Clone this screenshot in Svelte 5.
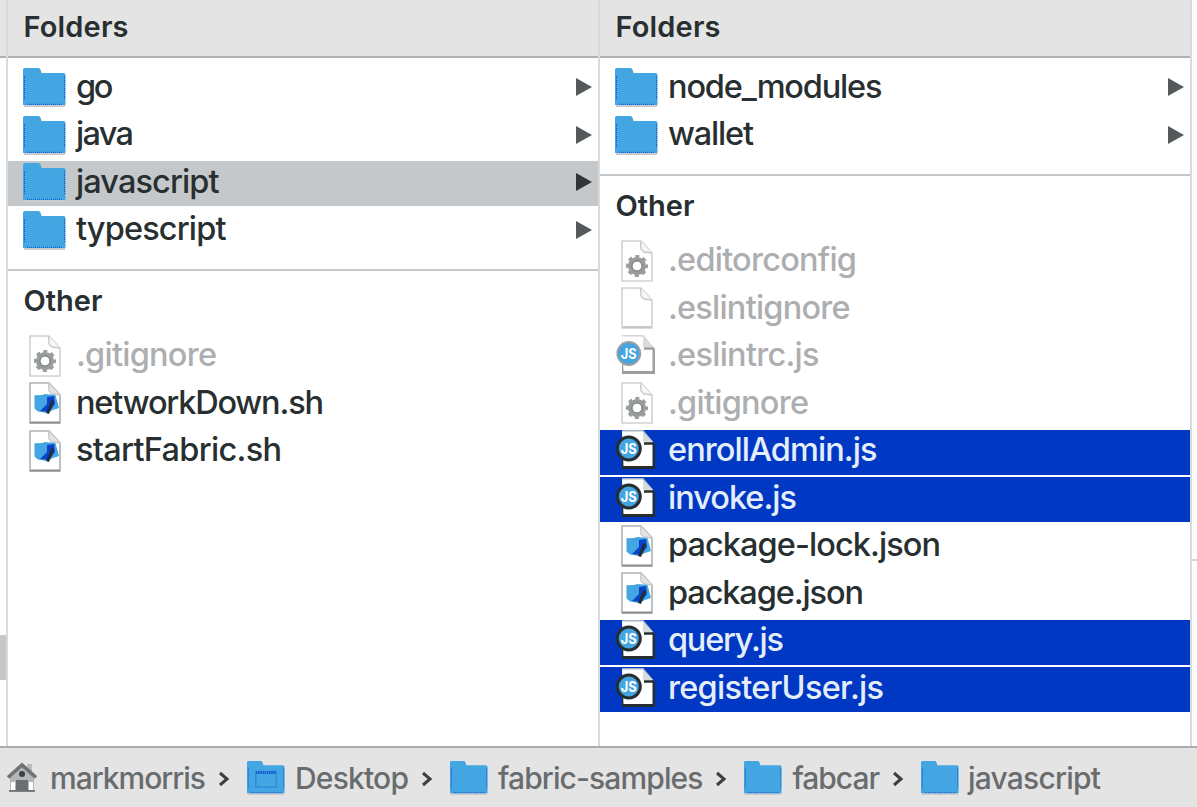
<script>
  const left = [
    { name: 'go', w: 34.5, icon: 'folder' },
    { name: 'java', w: 55, icon: 'folder' },
    { name: 'javascript', w: 140.5, icon: 'folder', state: 'current' },
    { name: 'typescript', w: 147.5, icon: 'folder' }
  ];
  const leftOther = [
    { name: '.gitignore', w: 138, icon: 'gear', state: 'dim' },
    { name: 'networkDown.sh', w: 245, icon: 'code' },
    { name: 'startFabric.sh', w: 203, icon: 'code' }
  ];
  const right = [
    { name: 'node_modules', w: 211.5, icon: 'folder' },
    { name: 'wallet', w: 83, icon: 'folder' }
  ];
  const rightOther = [
    { name: '.editorconfig', w: 186, icon: 'gear', state: 'dim' },
    { name: '.eslintignore', w: 179.5, icon: 'blank', state: 'dim' },
    { name: '.eslintrc.js', w: 148.5, icon: 'js', state: 'dim' },
    { name: '.gitignore', w: 138, icon: 'gear', state: 'dim' },
    { name: 'enrollAdmin.js', w: 206.5, icon: 'js', state: 'selected' },
    { name: 'invoke.js', w: 126, icon: 'js', state: 'selected' },
    { name: 'package-lock.json', w: 270, icon: 'code' },
    { name: 'package.json', w: 193, icon: 'code' },
    { name: 'query.js', w: 113, icon: 'js', state: 'selected' },
    { name: 'registerUser.js', w: 213, icon: 'js', state: 'selected' }
  ];
  const columns = [
    { folders: left, other: leftOther },
    { folders: right, other: rightOther }
  ];
  const path = [
    { name: 'markmorris', w: 153, icon: 'home' },
    { name: 'Desktop', w: 111, icon: 'desktop' },
    { name: 'fabric-samples', w: 202.5, icon: 'folder' },
    { name: 'fabcar', w: 84.5, icon: 'folder' },
    { name: 'javascript', w: 130, icon: 'folder' }
  ];

  // Tracks a label so that its letters span the given width.
  function fit(node, width) {
    const natural = node.getBoundingClientRect().width - 3;
    const spacing = (width - natural) / (node.textContent.length - 1);
    node.style.letterSpacing = spacing + 'px';
    node.style.marginRight = -spacing + 'px';
  }
</script>

{#snippet folder(desktop)}
  <svg class="folder" viewBox="0 0 43 40" preserveAspectRatio="none">
    <path d="M1 37h41v3H1z" fill="#c9cccd" />
    <path d="M0 2.5Q0 1 2 1h13q2 0 2.500 1.500l1 3.500h22q2 0 2 2v30H0z" fill="#43a5e1" />
    <path d="M1.500 9v24M41.500 9v24M4 37.300h35" stroke="#0b50cd" stroke-width="1" stroke-dasharray="1 1" fill="none" />
    {#if desktop}
      <path d="M10 13h23v18H10z" stroke="#0b50cd" stroke-width="1" stroke-dasharray="1 1" fill="none" />
      <path d="M10 14.500h23" stroke="#0b50cd" stroke-width="3" stroke-dasharray="1.500 1" />
    {/if}
  </svg>
{/snippet}

{#snippet icon(kind, state)}
  {#if kind === 'folder'}
    {@render folder(false)}
  {:else if kind === 'js'}
    {@const dark = state === 'selected' ? '#262d2f' : '#9c9fa1'}
    <svg class="js" viewBox="0 0 42 41">
      <path d="M6 1h21l12 13v25H6z" fill={dark} />
      <path d="M6 1h21l9.500 11v24H7.500z" fill="#fff" />
      <path d="M6 .8h21l10 12" fill="none" stroke={state === 'selected' ? '#a9b5c2' : '#d2d4d5'} stroke-width="1.500" />
      <path d="M27 2v10h10z" fill="#d9dcdd" />
      <path d="M28 13.500h9.500" stroke={dark} stroke-width="2.500" />
      <circle cx="12.800" cy="18.500" r="11.500" fill="#43a5e1" stroke={dark} stroke-width={state === 'selected' ? 3 : 1.8} />
      <text x="12.800" y="24" text-anchor="middle" textLength="16" lengthAdjust="spacingAndGlyphs">JS</text>
    </svg>
  {:else}
    <svg class="file" viewBox="0 0 32 42">
      <path d="M1 1h19l11 12v28H1z" fill="#fff" stroke={kind === 'code' ? '#b0b3b5' : '#cfd1d2'} stroke-width="1.600" />
      <path d="M19.500 1l.5 8 3 3 8 1" fill={kind === 'code' ? '#e3e4e5' : '#f7f7f7'} stroke="#c8cacc" stroke-width="1.400" />
      {#if kind === 'code'}
        <path d="M1 40.500h30" stroke="#8c8f91" stroke-width="2" />
        <path d="M5.500 13q5 1 11-1l10 1 3.500 13-6 2-6 3-9-1.500-3.500-3z" fill="#43a5e1" />
        <path d="M18 15l7-1 1 8-6 8-9-1 7-7z" fill="#0842c8" />
        <path d="M22.500 18l2.500 1-5 13-3-1z" fill="#262d2f" />
      {:else if kind === 'gear'}
        <g transform="translate(16 26)">
          <circle r="7" fill="none" stroke="#999c9e" stroke-width="4.200" />
          <circle r="9.700" fill="none" stroke="#999c9e" stroke-width="2.600" stroke-dasharray="4.100 3.518" stroke-dashoffset="2" />
          <circle r="5" fill="none" stroke="#707375" stroke-width="1" />
        </g>
      {:else}
        <path d="M2 40h28" stroke="#c4c8ca" stroke-width="2" />
      {/if}
    </svg>
  {/if}
{/snippet}

{#snippet row(item)}
  <li class="row {item.state ?? ''}">
    <span class="icon">{@render icon(item.icon, item.state)}</span>
    <span class="name" use:fit={item.w}>{item.name}</span>
    {#if item.icon === 'folder'}
      <svg class="arrow" viewBox="0 0 17 20"><path d="M0 1l16 9L0 19z" /></svg>
    {/if}
  </li>
{/snippet}

<div class="window">
  <main>
    <aside class="prev"><div class="head"></div><div class="mark"></div></aside>
    {#each columns as column}
      <section>
        <h2 class="head"><span use:fit={102}>Folders</span></h2>
        <ul class="folders">{#each column.folders as item}{@render row(item)}{/each}</ul>
        <h2 class="other"><span use:fit={76}>Other</span></h2>
        <ul>{#each column.other as item}{@render row(item)}{/each}</ul>
      </section>
    {/each}
    <aside class="next"><div></div></aside>
  </main>
  <footer>
    {#each path as crumb, i}
      {#if i}
        <svg class="chevron" viewBox="0 0 12 18"><path d="M2 3l7 6-7 6" /></svg>
      {/if}
      {#if crumb.icon === 'home'}
        <svg class="home" viewBox="0 0 30 31">
          <path d="M20 2h5v9h-5z" fill="#b9bcbd" />
          <path d="M3 14L15 4l12 10v15H3z" fill="#b4b6b8" />
          <path d="M4 20h4v8H4zm18 0h4v8h-4z" fill="#fff" />
          <path d="M1 15.500L15 3l14 12.500" fill="none" stroke="#707375" stroke-width="3.600" />
          <path d="M9 18h12v10H9z" fill="#6b6f71" />
          <circle cx="15" cy="12" r="3" fill="#3c4143" />
          <path d="M2 29h26" stroke="#505456" stroke-width="1.400" />
        </svg>
      {:else}
        {@render folder(crumb.icon === 'desktop')}
      {/if}
      <span class="crumb" class:tight={i === 4} use:fit={crumb.w}>{crumb.name}</span>
    {/each}
  </footer>
</div>

<style>
  :global(body) { margin: 0; background: #fff; }
  .window {
    width: 1197px; height: 807px; overflow: hidden;
    display: flex; flex-direction: column;
    font-family: Inter, sans-serif; color: #282f31; background: #fff;
  }
  main { flex: 1; min-height: 0; display: grid; grid-template-columns: 8px 592px 591.5px 1fr; }
  section { border-right: 2.500px solid #d9dadb; box-sizing: border-box; }
  .prev { border-right: 2.500px solid #d9dadb; box-sizing: border-box; }
  .mark { height: 45px; margin-top: 577px; background: #c4c8ca; }
  .next div { margin-top: 559px; height: 2px; background: #d5d6d7; }
  h2 { margin: 0; box-sizing: border-box; font-size: 29px; font-weight: 600; line-height: 34px; }
  h2 span { display: inline-block; white-space: nowrap; }
  .head { height: 57.500px; box-sizing: border-box; padding: 10px 0 0 15.500px; background: #e4e4e4; border-bottom: 2.500px solid #b0b0b0; }
  .prev .head { padding: 0; height: 58px; }
  ul { list-style: none; margin: 0; padding: 0; display: flex; flex-direction: column; gap: 2.500px; }
  .folders { padding: 8.500px 0 15.500px; border-bottom: 2px solid #c6c9cb; }
  .other { height: 63.500px; padding: 13px 0 0 15.500px; }
  .row { height: 45px; display: flex; align-items: center; box-sizing: border-box; padding-right: 5px; }
  .icon { width: 58px; height: 42px; padding-left: 15px; box-sizing: border-box; margin: 0 10px 3px 0; display: flex; justify-content: center; align-items: center; }
  .folder { width: 43px; height: 40px; flex: none; }
  .file { width: 32px; height: 42px; flex: none; }
  .js { width: 42px; height: 41px; flex: none; }
  .js text { font: 700 15px Inter, sans-serif; fill: #fff; }
  .name { font-size: 32.500px; line-height: 40px; font-weight: 550; white-space: nowrap; margin-bottom: 3.500px; }
  .arrow { width: 17px; height: 20px; margin-left: auto; fill: #54595b; margin-bottom: 3px; }
  .current { background: #c4c8ca; }
  .current .arrow { fill: #303638; }
  .dim .name { color: #acaeb0; font-weight: 500; }
  .selected { background: #0038c3; color: #e4eefa; }
  .selected .name { font-weight: 500; }
  footer { flex: none; height: 61px; box-sizing: border-box; display: flex; align-items: center; background: #e4e4e4; border-top: 2.500px solid #a9adaf; padding: 0 0 0 7px; }
  footer .folder { width: 38px; height: 35px; }
  .home { width: 30px; height: 31px; margin-right: 13px; flex: none; }
  .crumb { font-size: 30px; line-height: 40px; font-weight: 450; color: #686c6e; white-space: nowrap; margin-left: 10px; padding-top: 1px; }
  .home + .crumb { margin-left: 0; }
  .crumb.tight { margin-left: 9px; }
  .chevron { width: 12px; height: 18px; margin: 3px 17px 0 12px; fill: none; stroke: #3a4042; stroke-width: 3; flex: none; }
</style>
